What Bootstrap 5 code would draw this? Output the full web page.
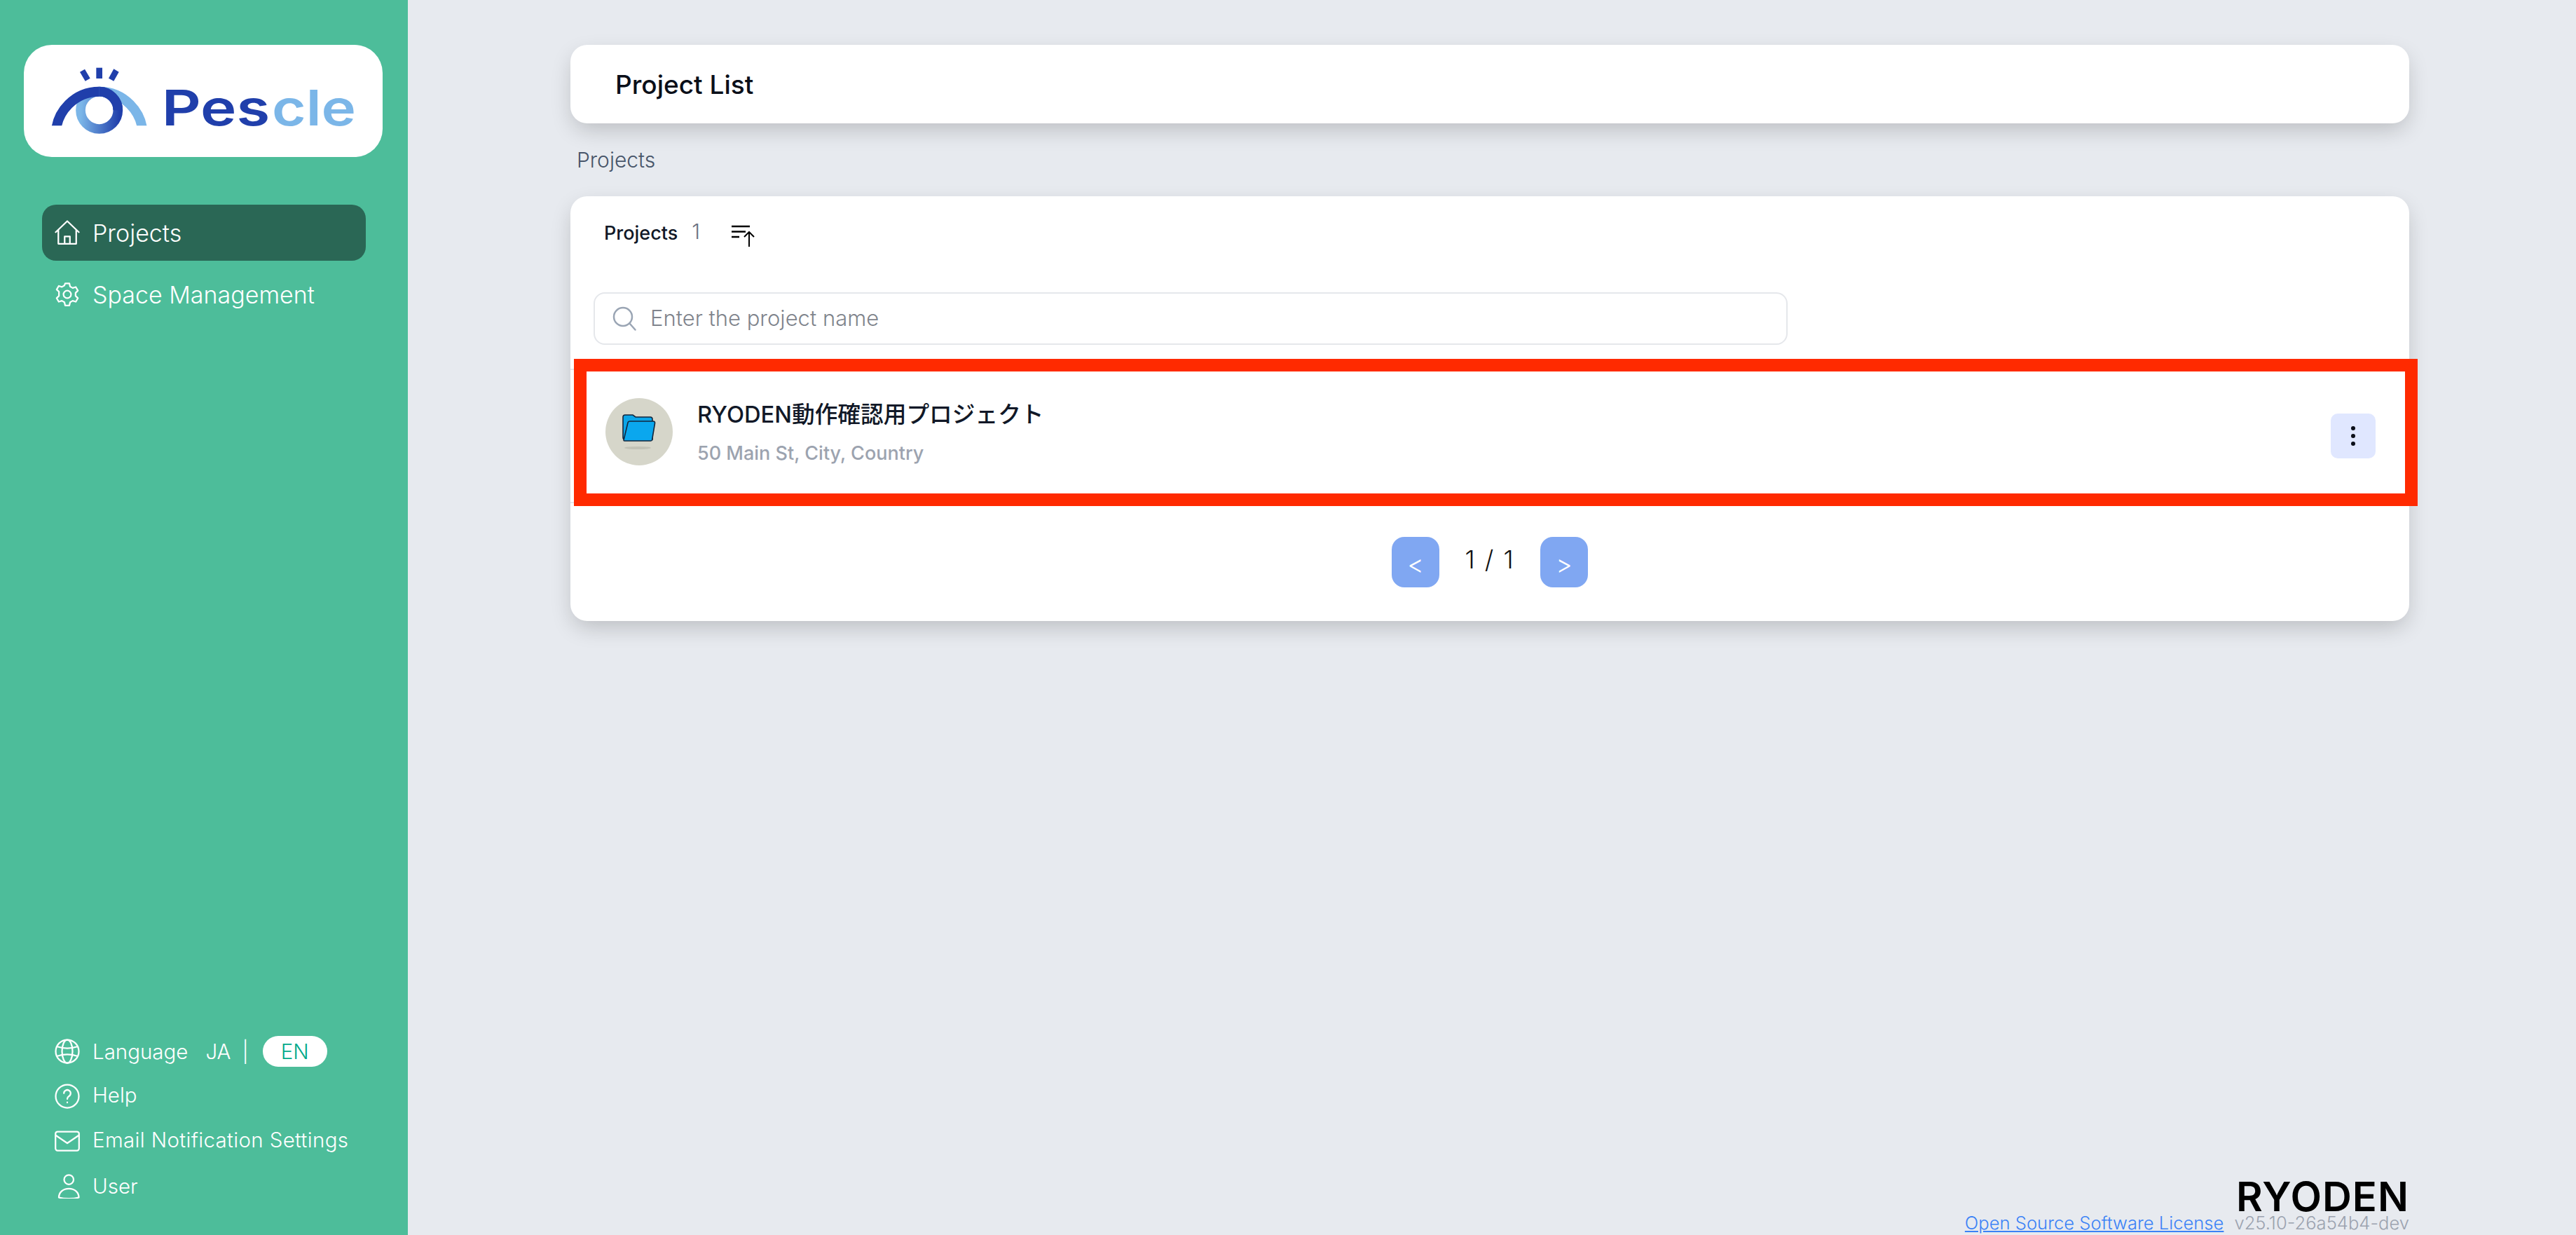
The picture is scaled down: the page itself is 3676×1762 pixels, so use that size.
<!DOCTYPE html>
<html lang="en">
<head>
<meta charset="utf-8">
<title>Project List</title>
<link href="https://cdn.jsdelivr.net/npm/bootstrap@5.3.0/dist/css/bootstrap.min.css" rel="stylesheet">
<style>
html,body{height:100%}
body{font-family:Inter,"Noto Sans CJK JP",sans-serif;background:#e7eaef;overflow:hidden}
.shell{height:1762px}
.side{width:582px;background:#4dbd9a;color:#fff;font-weight:300}
.logo-box{margin:64px 36px 0 34px;height:160px;background:#fff;border-radius:40px}
.logo-box svg{display:block}
.side-nav{margin:68px 60px 0 60px;gap:8px}
.side-link{height:80px;padding-left:18px;gap:18px;font-size:34px;color:#fff;border-radius:20px;text-decoration:none}
.side-link.on{background:#2a6755}
.ico{width:36px;height:36px;flex:none;fill:none;stroke:#fff;stroke-width:1.5;stroke-linecap:round;stroke-linejoin:round}
.side-foot{margin:auto 0 38px 78px}
.foot-row{height:64px;gap:18px;font-size:29.5px}
.foot-txt{padding-bottom:4px}
.foot-wide{letter-spacing:.35px}
.lang-ja{margin-left:25px}
.lang-bar{margin:0 20px 0 16px}
.lang-en{width:92px;height:44px;background:#fff;color:#00a98a;border-radius:22px}
.main-col{padding:64px 238px 0 232px;min-width:0}
.head-card{height:112px;border:0;border-radius:24px;padding-left:64px;box-shadow:0 12px 32px -4px rgba(0,0,0,.2)}
.head-title{font-size:37px;font-weight:500;color:#0b0f19;margin:0;padding-top:2px}
.crumb{margin:32px 0 32px 9px;height:40px;font-size:30px;font-weight:300;color:#475569;line-height:40px}
.list-card{height:606px;border:0;border-radius:24px;box-shadow:0 12px 32px -4px rgba(0,0,0,.2)}
.list-top{height:106px;padding:0 0 0 48px}
.list-name{font-size:27px;font-weight:500;color:#111827}
.list-count{font-size:30px;font-weight:300;color:#6b7280;margin:0 0 0 20px;line-height:1;position:relative;top:-3px}
.sort-ico{width:34px;height:32px;margin-left:45px;flex:none;position:relative;top:4px}
.search-wrap{width:1704px;height:75px;margin:31px 0 0 33px;border:2px solid #e5e7eb;border-radius:16px;padding-left:24px;gap:19px}
.search-wrap svg{width:36px;height:36px;flex:none}
.search-in{border:0;padding:0;font-size:31px;font-weight:300;box-shadow:none;background:transparent}
.search-in::placeholder{color:#7f848c}
.proj-row{height:192px;margin-top:34px;padding:0 48px 0 50px;border-top:2px solid #e5e7eb;border-bottom:2px solid #e5e7eb}
.avatar{width:96px;height:96px;background:#d6d6ca;border-radius:50%;margin:0 35px 12px 0;flex:none}
.proj-title{font-size:32.7px;font-weight:500;color:#111827;line-height:44px}
.proj-sub{font-size:27px;font-weight:500;color:#9ca3af;line-height:36px;margin-top:16px}
.proj-text{margin-bottom:10px}
.more-btn{width:64px;height:64px;background:#e0e7ff;border:0;border-radius:10px;padding:0;gap:5px}
.more-btn i{display:block;width:6px;height:6px;border-radius:50%;background:#0b0f19}
.annot{position:absolute;top:-16px;bottom:-6px;left:5px;right:-12px;border:18px solid #ff2a00;pointer-events:none}
.pager{margin-top:48px}
.page-btn{width:68px;height:72px;padding:6px 0 0;background:#80a7f2;border:0;border-radius:18px;color:#fff;font-size:36px;font-weight:300;line-height:1}
.page-btn:disabled{background:#80a7f2;color:#fff;opacity:1}
.page-num{width:144px;text-align:center;font-size:36px;font-weight:300;color:#111;letter-spacing:2px;padding-bottom:8px}
.foot-main{margin-bottom:0;height:76px;margin-top:auto}
.maker{font-weight:600;font-size:58px;line-height:42px;color:#000;height:42px;letter-spacing:1px}
.legal{font-size:25.6px;font-weight:300;line-height:30px;height:33px;gap:15px;padding-top:2px}
.legal a{color:#3b82f6}
.legal span{color:#9ca3af}
</style>
</head>
<body>
<div class="shell d-flex">
  <aside class="side d-flex flex-column flex-shrink-0">
    <div class="logo-box">
      <svg width="510" height="160" viewBox="12 12 1530 480" role="img" aria-label="Pescle">
        <defs>
          <clipPath id="cut"><rect x="0" y="0" width="700" height="358"/></clipPath>
          <linearGradient id="ringg" gradientUnits="userSpaceOnUse" x1="255" y1="330" x2="420" y2="340">
            <stop offset="0" stop-color="#7bb6e8"/><stop offset="1" stop-color="#203fab"/>
          </linearGradient>
        </defs>
        <rect x="322" y="110" width="26" height="46" fill="#203fab"/>
        <polygon points="252,128 273,116 296,155 275,167" fill="#203fab"/>
        <polygon points="397,115 419,128 397,167 375,155" fill="#203fab"/>
        <g clip-path="url(#cut)"><path d="M335 212A186 186 0 0 1 521 398" fill="none" stroke="#7bb6e8" stroke-width="42"/></g>
        <circle cx="335" cy="292" r="80" fill="none" stroke="url(#ringg)" stroke-width="41"/>
        <g clip-path="url(#cut)"><path d="M149 398A186 186 0 0 1 335 212" fill="none" stroke="#203fab" stroke-width="42"/></g>
        <path d="M335 212A80 80 0 0 1 415 292" fill="none" stroke="#203fab" stroke-width="41"/>
        <text x="602" y="358" font-family="Inter,sans-serif" font-weight="600" font-size="210" fill="#203fab" textLength="464" lengthAdjust="spacingAndGlyphs">Pes</text>
        <text x="1074" y="358" font-family="Inter,sans-serif" font-weight="600" font-size="210" fill="#7bb6e8" textLength="360" lengthAdjust="spacingAndGlyphs">cle</text>
      </svg>
    </div>
    <nav class="side-nav nav flex-column flex-nowrap">
      <a class="side-link on d-flex align-items-center" href="#">
        <svg class="ico" viewBox="0 0 24 24"><path d="M1 11.5 12 1l11 10.5M3.5 9.5V22.5h17V9.5M9.5 22.5v-7h5v7"/></svg>Projects</a>
      <a class="side-link d-flex align-items-center" href="#">
        <svg class="ico" viewBox="0 0 24 24"><circle cx="12" cy="12" r="3.6"/><path d="M10 1.5h4l.7 3 2.4 1.4 3-.9 2 3.4-2.2 2.2v2.8l2.2 2.2-2 3.4-3-.9-2.4 1.4-.7 3h-4l-.7-3-2.4-1.4-3 .9-2-3.4 2.2-2.2V9.400L1.900 7.400l2-3.400 3 .9 2.400-1.400z"/></svg>Space Management</a>
    </nav>
    <div class="side-foot">
      <div class="foot-row d-flex align-items-center">
        <svg class="ico" viewBox="0 0 24 24"><circle cx="12" cy="12" r="11"/><ellipse cx="12" cy="12" rx="5" ry="11"/><path d="M2.500 7.500c6 2 13 2 19 0M2.500 16.500c6-2 13-2 19 0"/></svg>
        <span class="d-flex align-items-center">Language<span class="lang-ja">JA</span><span class="lang-bar">|</span><span class="lang-en d-flex align-items-center justify-content-center">EN</span></span>
      </div>
      <div class="foot-row d-flex align-items-center">
        <svg class="ico" viewBox="0 0 24 24"><circle cx="12" cy="12" r="11"/><path d="M8.800 9.200a3.200 3.200 0 1 1 4.800 2.800c-1 .6-1.600 1.300-1.600 2.600M12 17.800v.2"/></svg>
        <span class="foot-txt">Help</span>
      </div>
      <div class="foot-row d-flex align-items-center">
        <svg class="ico" viewBox="0 0 24 24"><rect x=".8" y="3" width="22.400" height="18" rx="2"/><path d="M1 6.500 12 14l11-7.500"/></svg>
        <span class="foot-txt foot-wide">Email Notification Settings</span>
      </div>
      <div class="foot-row d-flex align-items-center">
        <svg class="ico" viewBox="0 0 24 24"><circle cx="13.500" cy="6" r="4.500"/><path d="M4 23c0-5 4-8.500 9.500-8.500S23 18 23 23c-5.500 1.500-13.500 1.500-19 0z"/></svg>
        <span>User</span>
      </div>
    </div>
  </aside>

  <main class="main-col flex-grow-1 d-flex flex-column">
    <div class="card head-card flex-row align-items-center">
      <h1 class="head-title">Project List</h1>
    </div>
    <div class="crumb">Projects</div>
    <section class="card list-card">
      <div class="list-top d-flex align-items-center">
        <span class="list-name">Projects</span>
        <span class="list-count">1</span>
        <svg class="sort-ico" viewBox="0 0 34 32" fill="none" stroke="#000" stroke-width="2.500"><path d="M0 2h26M0 9.500h20M0 17h11"/><path d="M25 31V10M18 17l7-7 7 7" stroke-width="2"/></svg>
      </div>
      <div class="search-wrap d-flex align-items-center">
        <svg viewBox="0 0 36 36" fill="none" stroke="#9aa5b4" stroke-width="2.500" stroke-linecap="round"><circle cx="16" cy="15" r="13"/><path d="m25.500 24.500 8 9"/></svg>
        <input class="form-control search-in" type="text" placeholder="Enter the project name">
      </div>
      <div class="proj-row position-relative d-flex align-items-center">
        <div class="avatar d-flex align-items-center justify-content-center">
          <svg width="50" height="54" viewBox="0 0 50 54">
            <ellipse cx="23" cy="50" rx="19" ry="2" fill="#c2c2b6"/>
            <path d="M2 6q0-3 3-3h11l4 3h21q3 0 3 3v29H5q-3 0-3-3z" fill="#0aa5e8" stroke="#13263c" stroke-width="1.600"/>
            <path d="M9 14q.5-2 3-2h33q3 0 2.500 3l-4 24q-.5 1-2 1H4q-1 0-1-1z" fill="#0aa7ee" stroke="#13263c" stroke-width="1.600"/>
          </svg>
        </div>
        <div class="proj-text flex-grow-1">
          <div class="proj-title">RYODEN動作確認用プロジェクト</div>
          <div class="proj-sub">50 Main St, City, Country</div>
        </div>
        <button class="btn more-btn d-flex flex-column align-items-center justify-content-center" type="button" aria-label="More"><i></i><i></i><i></i></button>
        <div class="annot"></div>
      </div>
      <div class="pager d-flex justify-content-center align-items-center">
        <button class="btn page-btn" type="button" disabled>&lt;</button>
        <span class="page-num">1 / 1</span>
        <button class="btn page-btn" type="button" disabled>&gt;</button>
      </div>
    </section>
    <footer class="foot-main d-flex flex-column align-items-end">
      <div class="maker">RYODEN</div>
      <div class="legal d-flex"><a href="#">Open Source Software License</a><span>v25.10-26a54b4-dev</span></div>
    </footer>
  </main>
</div>
<script src="https://cdn.jsdelivr.net/npm/bootstrap@5.3.0/dist/js/bootstrap.bundle.min.js"></script>
</body>
</html>
